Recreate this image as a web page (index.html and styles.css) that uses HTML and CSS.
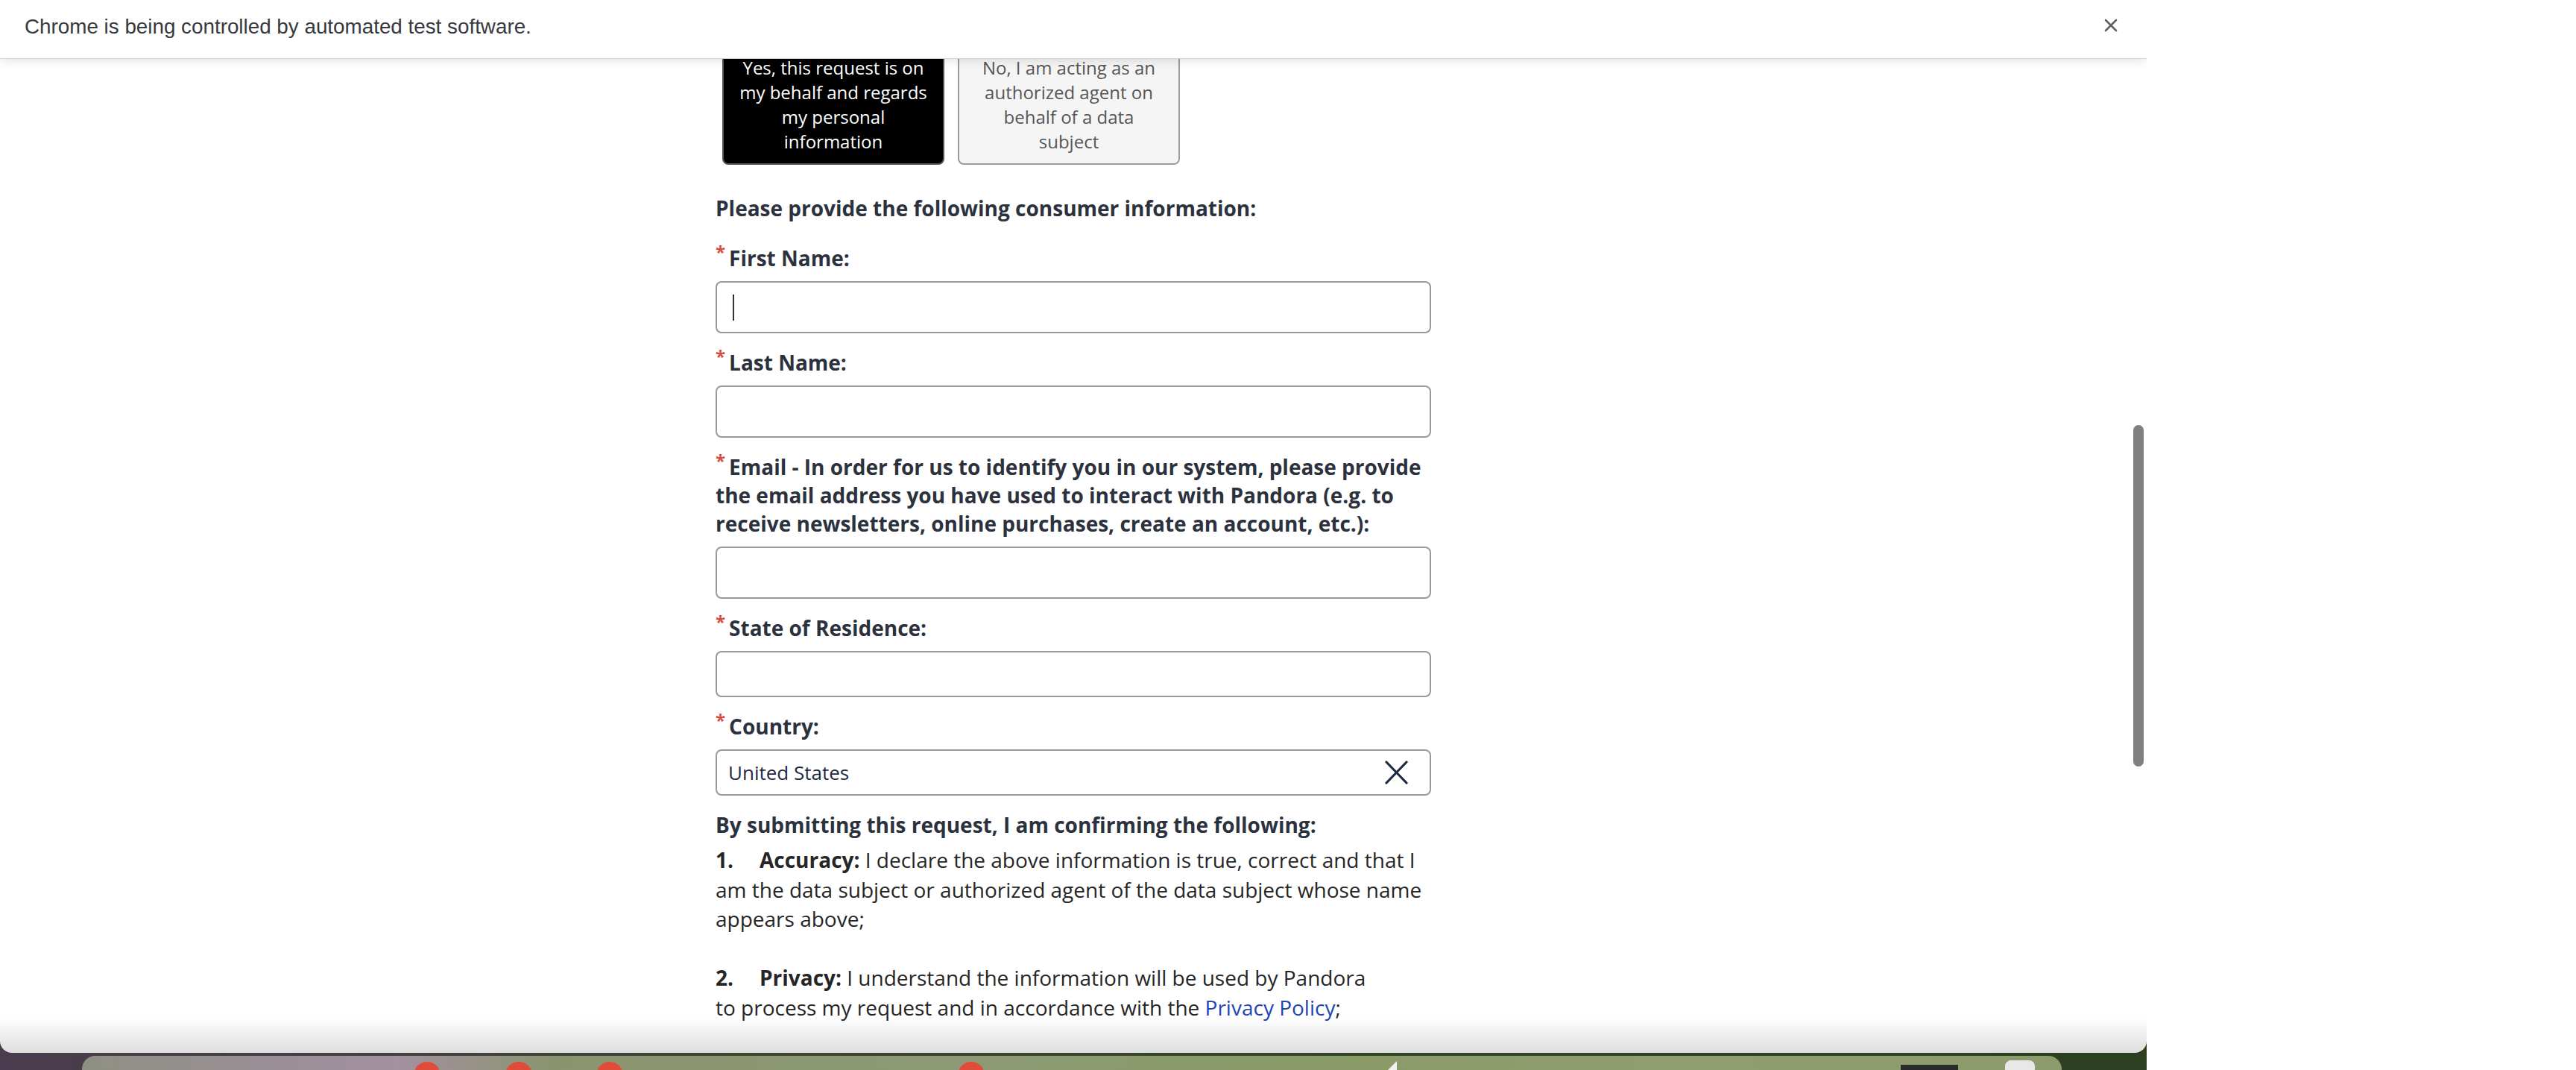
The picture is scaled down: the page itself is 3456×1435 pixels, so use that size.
FILE: index.html
```html
<!DOCTYPE html>
<html lang="en">
<head>
<meta charset="utf-8">
<title>Privacy request form</title>
<link rel="stylesheet" href="styles.css">
</head>
<body>
<div class="desktop">
  <div class="window">
    <div class="infobar">
      <span class="infobar-text">Chrome is being controlled by automated test software.</span>
      <svg class="infobar-close" width="18" height="18" viewBox="0 0 18 18" aria-hidden="true">
        <path d="M2 2 L16 16 M16 2 L2 16" stroke="#5f6368" stroke-width="2.6" stroke-linecap="round" fill="none"/>
      </svg>
    </div>
    <div class="viewport">
      <main class="page">
        <div class="choices">
          <div class="choice choice-active">Yes, this request is on my behalf and regards my personal information</div>
          <div class="choice">No, I am acting as an authorized agent on behalf of a data subject</div>
        </div>

        <h3 class="section-title section-title-info">Please provide the following consumer information:</h3>

        <div class="field">
          <label class="label"><span class="req">*</span>First Name:</label>
          <div class="input input-text"><span class="caret"></span></div>
        </div>

        <div class="field">
          <label class="label"><span class="req">*</span>Last Name:</label>
          <div class="input input-text"></div>
        </div>

        <div class="field">
          <label class="label"><span class="req">*</span>Email - In order for us to identify you in our system, please provide the email address you have used to interact with Pandora (e.g. to receive newsletters, online purchases, create an account, etc.):</label>
          <div class="input input-text"></div>
        </div>

        <div class="field">
          <label class="label"><span class="req">*</span>State of Residence:</label>
          <div class="input input-short"></div>
        </div>

        <div class="field">
          <label class="label"><span class="req">*</span>Country:</label>
          <div class="input input-short input-select">
            <span class="input-value">United States</span>
            <svg class="clear-icon" width="31" height="32" viewBox="0 0 31 32" aria-hidden="true">
              <path d="M2 2 L29 30 M29 2 L2 30" stroke="#1e2a44" stroke-width="3.2" stroke-linecap="round" fill="none"/>
            </svg>
          </div>
        </div>

        <h3 class="section-title section-title-confirm">By submitting this request, I am confirming the following:</h3>

        <p class="terms"><b class="num">1.</b><b>Accuracy:</b> I declare the above information is true, correct and that I am the data subject or authorized agent of the data subject whose name appears above;</p>
        <p class="terms"><b class="num">2.</b><b>Privacy:</b> I understand the information will be used by Pandora<br>to process my request and in accordance with the <a class="link" href="#">Privacy Policy</a>;</p>
      </main>
      <div class="scrollbar"></div>
      <div class="bottom-fade"></div>
    </div>
  </div>
  <div class="dock">
    <span class="dock-icon dock-red dock-i1"></span>
    <span class="dock-icon dock-red dock-i2"></span>
    <span class="dock-icon dock-red dock-i3"></span>
    <span class="dock-icon dock-red dock-i4"></span>
    <span class="dock-tip"></span>
    <span class="dock-dark"></span>
    <span class="dock-white"></span>
  </div>
</div>
</body>
</html>
```

FILE: styles.css
```css
html, body {
  margin: 0;
  padding: 0;
}

body {
  background: #ffffff;
  font-family: "Open Sans", "Noto Sans", sans-serif;
  overflow: hidden;
}

.desktop {
  width: 2880px;
  height: 1435px;
  display: flex;
  flex-direction: column;
  background: linear-gradient(90deg, #4a3c4e 0%, #3f4533 35%, #34452a 65%, #2c3f20 100%);
}

.window {
  height: 1412px;
  flex: none;
  background: #ffffff;
  border-radius: 0 0 16px 16px;
  overflow: hidden;
  display: flex;
  flex-direction: column;
}

/* Chrome automation infobar */
.infobar {
  height: 78px;
  flex: none;
  box-sizing: border-box;
  padding: 20px 39px 0 33px;
  display: flex;
  align-items: flex-start;
  justify-content: space-between;
  background: #ffffff;
  position: relative;
  z-index: 2;
  box-shadow: 0 1px 0 #d2d2d2, 0 3px 14px rgba(0, 0, 0, 0.12);
}

.infobar-text {
  font-family: "Liberation Sans", Arial, sans-serif;
  font-size: 27.8px;
  color: #36393e;
}

.infobar-close {
  margin-top: 5px;
}

.viewport {
  flex: 1;
  position: relative;
  overflow: hidden;
}

.page {
  width: 960px;
  margin: -19px auto 0;
  color: #2b323e;
}

/* Choice buttons */
.choices {
  display: flex;
  gap: 18px;
  padding-left: 9px;
  margin-bottom: 39px;
}

.choice {
  width: 298px;
  box-sizing: border-box;
  border: 2px solid #9c9c9c;
  border-radius: 8px;
  padding: 13px 20px;
  font-size: 24px;
  line-height: 33px;
  text-align: center;
  background: #f5f5f5;
  color: #555555;
}

.choice-active {
  background: #000000;
  border-color: #555555;
  color: #ffffff;
}

/* Headings */
.section-title {
  font-size: 28px;
  line-height: 38px;
  font-weight: 700;
  margin: 0;
  color: #2b323e;
}

.section-title-info {
  margin-bottom: 29px;
}

.section-title-confirm {
  margin-bottom: 9px;
}

/* Fields */
.field {
  margin-bottom: 20px;
}

.label {
  display: block;
  font-size: 28px;
  line-height: 38px;
  font-weight: 700;
  margin-bottom: 12px;
}

.req {
  color: #d64b3f;
  font-size: 24px;
  line-height: 0;
  vertical-align: 10px;
  margin-right: 5px;
}

.input {
  box-sizing: border-box;
  height: 70px;
  border: 2px solid #9a9a9a;
  border-radius: 8px;
  background: #ffffff;
  display: flex;
  align-items: center;
  padding: 0 21px;
}

.input-short {
  height: 62px;
}

.input-select {
  padding: 0 29px 0 15px;
}

.caret {
  width: 2px;
  height: 35px;
  background: #333333;
}

.input-value {
  font-size: 26px;
  color: #1f2a44;
}

.clear-icon {
  margin-left: auto;
}

/* Terms */
.terms {
  font-size: 28px;
  line-height: 39.5px;
  margin: 0;
  color: #262626;
}

.terms + .terms {
  margin-top: 39.5px;
}

.terms b {
  color: #262626;
}

.num {
  margin-right: 35px;
}

.link {
  color: #1f45b5;
  text-decoration: none;
}

/* Overlays */
.scrollbar {
  position: absolute;
  top: 492px;
  right: 4px;
  width: 14px;
  height: 458px;
  border-radius: 7px;
  background: #808080;
}

.bottom-fade {
  position: absolute;
  left: 0;
  right: 0;
  bottom: 0;
  height: 48px;
  background: linear-gradient(180deg, rgba(0, 0, 0, 0) 0%, rgba(0, 0, 0, 0.13) 100%);
}

/* Dock strip */
.dock {
  margin: 4px 0 0 110px;
  width: 2656px;
  height: 19px;
  border-radius: 18px 18px 0 0;
  position: relative;
  overflow: hidden;
  background: linear-gradient(90deg, #8e9084 0%, #9a8f97 10%, #a3919e 16%, #8a946f 24%, #8d9a75 45%, #8a9a66 62%, #909e70 80%, #8c9b6c 100%);
}

.dock-icon {
  position: absolute;
  top: 8px;
  width: 36px;
  height: 36px;
  border-radius: 50%;
}

.dock-red {
  background: #e04b3a;
}

.dock-i1 { left: 445px; }
.dock-i2 { left: 568px; }
.dock-i3 { left: 690px; }
.dock-i4 { left: 1175px; }

.dock-tip {
  position: absolute;
  left: 1750px;
  top: 7px;
  width: 0;
  height: 0;
  border-left: 14px solid transparent;
  border-bottom: 14px solid #f2f2f2;
}

.dock-dark {
  position: absolute;
  left: 2440px;
  top: 12px;
  width: 77px;
  height: 10px;
  background: #2a2a2a;
}

.dock-white {
  position: absolute;
  left: 2580px;
  top: 6px;
  width: 40px;
  height: 16px;
  border-radius: 8px 8px 0 0;
  background: #e8e8e8;
}
```
